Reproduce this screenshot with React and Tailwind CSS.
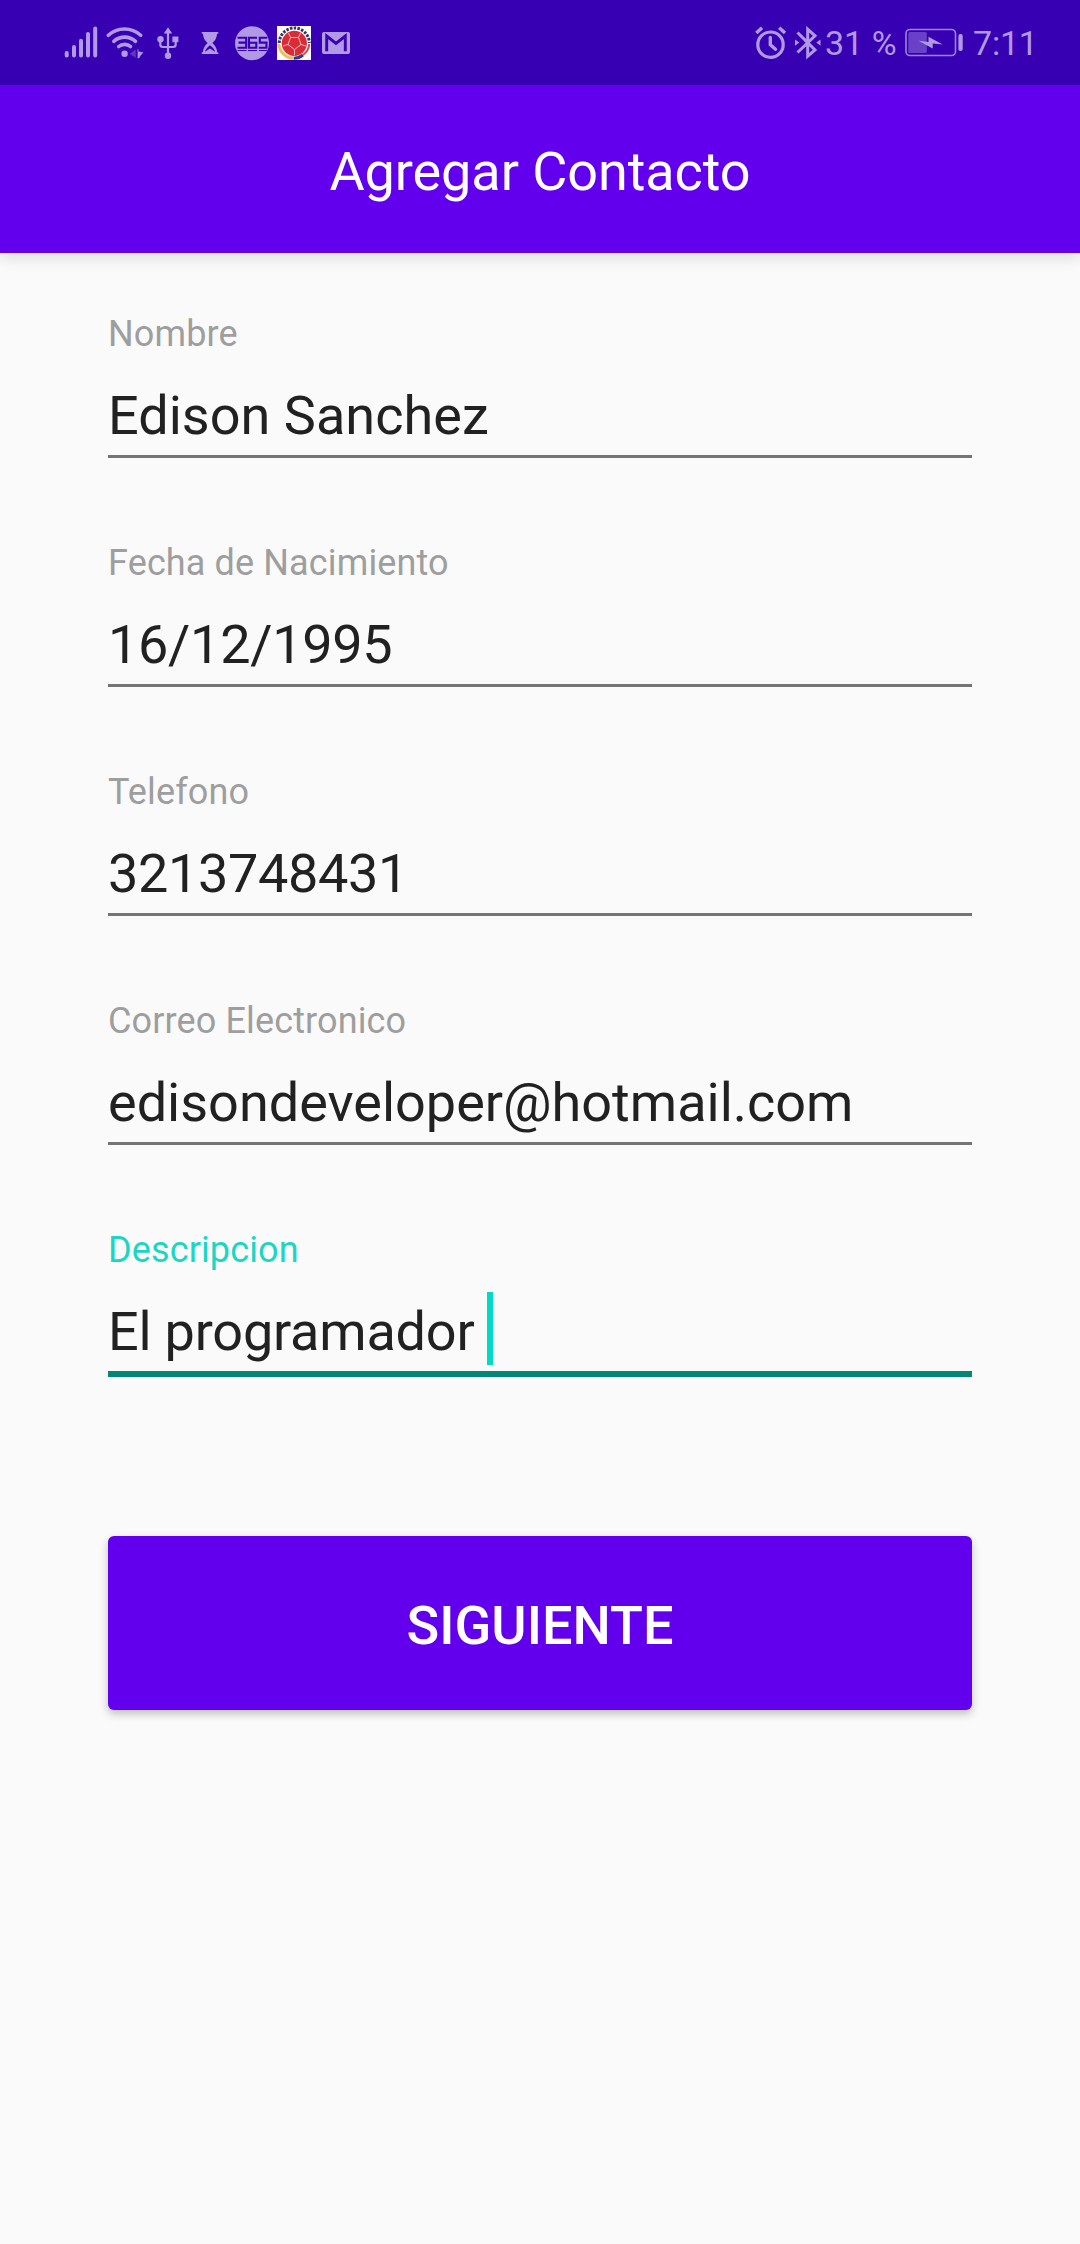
const FIELDS = [
  { label: "Nombre", value: "Edison Sanchez", tracking: "tracking-[0.03px]" },
  { label: "Fecha de Nacimiento", value: "16/12/1995", tracking: "tracking-[-0.3px]" },
  { label: "Telefono", value: "3213748431", tracking: "tracking-[-0.35px]" },
  { label: "Correo Electronico", value: "edisondeveloper@hotmail.com", tracking: "tracking-[0px]" },
  { label: "Descripcion", value: "El programador", tracking: "tracking-[-0.2px]", focused: true },
];

function SignalIcon() {
  return (
    <svg className="h-9 w-[34px]" viewBox="0 0 34 36" fill="none" stroke="currentColor" strokeWidth="4" strokeLinecap="round">
      <path d="M2.7 29.5v-2.6M10 29.5v-8.500M17 29.500v-14.800M24 29.500v-21.500M31.200 29.500v-27" />
    </svg>
  );
}

function WifiIcon() {
  return (
    <svg className="h-9 w-[38px]" viewBox="0 0 38 36" fill="none" stroke="currentColor" strokeWidth="3.6" strokeLinecap="round">
      <path d="M2.300 9.300C11.500 0.800 25.500 0.800 34.700 9.300" />
      <path d="M7.800 15.300C14 9.700 23.400 9.700 29.500 15.300" />
      <path d="M12.700 20.500C16 17.600 21.400 17.600 24.500 20.500" />
      <circle cx="18.600" cy="27.700" r="3.200" fill="currentColor" stroke="none" />
      <path d="M29.700 23.500v8.500l-6-4.300z" fill="currentColor" stroke="none" opacity="0.35" />
      <path d="M32 23.700v2l5 0.800-2.600 3L33 32h-1z" fill="currentColor" stroke="currentColor" strokeWidth="0.500" />
    </svg>
  );
}

function UsbIcon() {
  return (
    <svg className="h-9 w-6" viewBox="0 0 24 36" fill="none" stroke="currentColor" strokeWidth="2.200">
      <path d="M12 29V5M4.300 13v5.500q0 2.500 2.500 2.500h10.400q2.500 0 2.500-2.500V13" />
      <path d="M12 1.200l4.200 6.300H7.800z" fill="currentColor" stroke="none" />
      <circle cx="4.500" cy="13.300" r="3.200" fill="currentColor" stroke="none" />
      <path d="M16.400 10.500h6v5.700h-6z" fill="currentColor" stroke="none" />
      <circle cx="12" cy="29.700" r="3.200" fill="currentColor" stroke="none" />
    </svg>
  );
}

function HourglassIcon() {
  return (
    <svg className="h-9 w-[18px]" viewBox="0 0 18 36" fill="currentColor">
      <path d="M0.700 6h16.600v1.800h-1.300q0 5.200-4.600 9.200 4.600 4 4.600 9.200h1.300V28H0.700v-1.800H2q0-5.200 4.600-9.200Q2 13 2 7.800H0.700z" />
      <path d="M4 25.800q0.300-3 5-6.600 4.700 3.600 5 6.600l-5-3.200z" fill="#3700b3" />
    </svg>
  );
}

function Badge365Icon() {
  return (
    <svg className="h-9 w-[34px]" viewBox="0 0 34 36">
      <circle cx="17" cy="17.200" r="17" fill="currentColor" />
      <g fill="none" stroke="#3700b3" strokeWidth="2.100">
        <path d="M2.500 11.700h8.700v10H2.500M3.500 16.600h7.700" />
        <path d="M22 11.700h-8v10h7.300v-5H14" />
        <path d="M32.300 11.700h-7.500v4.900h6.700v5.100h-7.700" />
      </g>
      <path d="M2.500 24.500h9M13 24.500h9M24 24.500h8" stroke="#3700b3" strokeWidth="1" />
    </svg>
  );
}

function FootballIcon() {
  return (
    <svg className="h-9 w-[34px]" viewBox="0 0 34 36">
      <path d="M0 0h34v34H0z" fill="#fff" />
      <path d="M2.300 17A15 15 0 0 1 32.300 17" fill="none" stroke="#38345f" strokeWidth="3" strokeDasharray="2.500 1.300" />
      <path d="M1.800 18A15.200 15.200 0 0 0 17 32.300" fill="none" stroke="#edbf55" strokeWidth="3" />
      <path d="M17 32.300A15.200 15.200 0 0 0 26 29" fill="none" stroke="#343b83" strokeWidth="3" />
      <path d="M26 29A15.200 15.200 0 0 0 32.300 18" fill="none" stroke="#d94450" strokeWidth="2" />
      <circle cx="17.300" cy="17.300" r="12.600" fill="#d92c36" />
      <path d="M13.500 11.500h8l2.500 7-6.500 5-6.500-5zM13.500 11.500l-2-4.500M21.500 11.500l2-4.500M24 18.500l5 1.500M17.500 23.500v5.800M11 18.500l-5 1.500" fill="none" stroke="#f7c9cb" strokeWidth="0.900" />
    </svg>
  );
}

function MailIcon() {
  return (
    <svg className="h-9 w-7" viewBox="0 0 28 36">
      <rect y="6" width="28" height="22" rx="2" fill="currentColor" />
      <path d="M4.700 25.200V10L14 17.300 23.300 10v15.200" fill="none" stroke="#3700b3" strokeWidth="2.900" />
    </svg>
  );
}

function AlarmIcon() {
  return (
    <svg className="h-9 w-8" viewBox="0 0 32 36" fill="none" stroke="currentColor" strokeWidth="3.200">
      <circle cx="15.500" cy="18.700" r="12.700" />
      <path d="M15.300 11.500v7.200l5.200 4.500" strokeWidth="3.400" strokeLinecap="round" />
      <path d="M1.300 7L7 1.800M24.200 1.800L30 7" strokeWidth="3.500" />
    </svg>
  );
}

function BluetoothIcon() {
  return (
    <svg className="h-9 w-[26px]" viewBox="0 0 26 36" fill="none" stroke="currentColor" strokeWidth="3">
      <path d="M2.500 6.500L20 24l-7.300 6.300V3.200L20 9.800 2.500 26.500" />
      <path d="M0 13.600l4.200 3L0 19.800zM25.500 13.600l-4.200 3 4.200 3.200z" fill="currentColor" stroke="none" />
    </svg>
  );
}

function BatteryIcon() {
  return (
    <svg className="h-9 w-[58px]" viewBox="0 0 58 36">
      <rect x="1" y="3.500" width="49.500" height="26" rx="4" fill="none" stroke="currentColor" strokeWidth="1.600" opacity="0.850" />
      <rect x="3.300" y="6" width="18.500" height="21" rx="1.500" fill="currentColor" opacity="0.420" />
      <rect x="53.400" y="8" width="4.300" height="17" rx="2" fill="currentColor" />
      <path d="M13.500 14.800l10 1.200V10.700L37.700 18.500l-10-0.900v5z" fill="currentColor" />
    </svg>
  );
}

function StatusBar() {
  return (
    <header className="flex h-[85px] items-start justify-between bg-[#3700b3] pt-[26px] text-[#b199e6]">
      <div className="flex pl-16">
        <SignalIcon />
        <div className="ml-2"><WifiIcon /></div>
        <div className="ml-3"><UsbIcon /></div>
        <div className="ml-[21px]"><HourglassIcon /></div>
        <div className="ml-4"><Badge365Icon /></div>
        <div className="ml-2"><FootballIcon /></div>
        <div className="ml-[11px]"><MailIcon /></div>
      </div>
      <div className="flex pr-[45px] text-[34px] leading-[35px]">
        <AlarmIcon />
        <div className="ml-2"><BluetoothIcon /></div>
        <span className="ml-1 w-20 whitespace-nowrap">31 %</span>
        <BatteryIcon />
        <span className="ml-[10px] w-[62px] whitespace-nowrap tracking-[-0.2px]">7:11</span>
      </div>
    </header>
  );
}

function Field({ label, value, tracking, focused }) {
  return (
    <div className="h-[229px]">
      <div className={`text-[36px] leading-[48px] tracking-[0.13px] ${focused ? "text-[#1bd6c4]" : "text-[#9e9e9e]"}`}>{label}</div>
      <div className="mt-[22px] flex h-[75px] items-start text-[54px] leading-[72px] text-[#212121]">
        <span className={`whitespace-pre ${tracking}`}>{value}</span>
        {focused && <span className="ml-3 -mt-1 h-[73px] w-1.5 bg-[#03dac5]" />}
      </div>
      <div className={focused ? "h-1.5 bg-[#038676]" : "h-[3px] bg-[#757575]"} />
    </div>
  );
}

export default function App() {
  return (
    <div className="min-h-[2244px] w-[1080px] bg-[#fafafa] font-['Roboto',sans-serif]">
      <StatusBar />
      <div className="flex h-[168px] items-center justify-center bg-[#6200ee] pt-1.5 text-[54px] leading-[72px] tracking-[-0.08px] text-white shadow-[0_5px_14px_rgba(0,0,0,0.12)]">
        <h1>Agregar Contacto</h1>
      </div>
      <main className="px-[108px] pt-[57px]">
        {FIELDS.map((field) => (
          <Field key={field.label} {...field} />
        ))}
        <button className="mt-[81px] flex h-[174px] w-full items-center justify-center rounded-md bg-[#6200ee] pt-[6px] text-[54px] leading-[72px] font-medium text-white shadow-[0_4px_8px_rgba(0,0,0,0.24)]">
          SIGUIENTE
        </button>
      </main>
    </div>
  );
}
